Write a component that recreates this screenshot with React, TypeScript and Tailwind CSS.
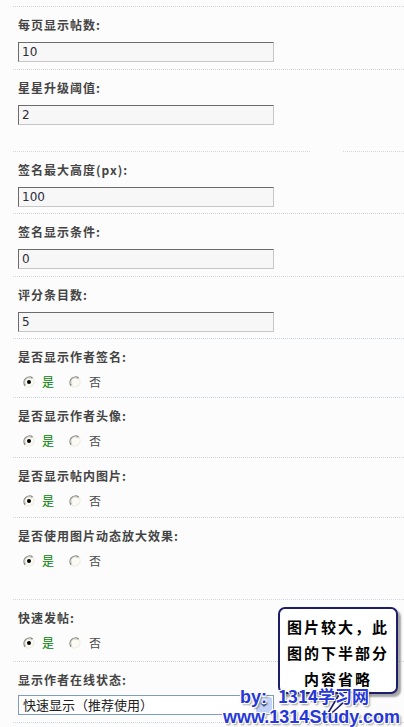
import React from "react";

const cjk = "font-['Noto_Sans_CJK_SC',sans-serif]";

function Dots() {
  return <div className="h-px border-t border-dotted border-[#cfd6df]" />;
}

function SplitDots() {
  return (
    <div className="flex h-px">
      <div className="w-[297px] border-t border-dotted border-[#cfd6df]" />
      <div className="ml-[33px] flex-1 border-t border-dotted border-[#cfd6df]" />
    </div>
  );
}

function Label({ text }: { text: string }) {
  return (
    <div className={`${cjk} h-4 text-[12px] leading-4 font-bold tracking-[1px] text-[#444]`}>
      {text}
    </div>
  );
}

function Radio({ checked }: { checked: boolean }) {
  return (
    <svg width="12" height="12" viewBox="0 0 12 12" className="shrink-0">
      <circle cx="6" cy="6" r="5.4" fill="#fbfbf3" />
      <path d="M2.2 9.8 A5.4 5.4 0 0 1 9.8 2.2" fill="none" stroke="#858585" strokeWidth="1.2" />
      <path d="M9.8 2.2 A5.4 5.4 0 0 1 2.2 9.8" fill="none" stroke="#ecece4" strokeWidth="1.2" />
      <path d="M3 9 A4.2 4.2 0 0 1 9 3" fill="none" stroke="#b5b5b0" strokeWidth="0.8" />
      {checked && <circle cx="6" cy="6" r="2" fill="#000" />}
    </svg>
  );
}

function TextRow({ label, value, pb, split }: { label: string; value: string; pb: string; split?: boolean }) {
  return (
    <div>
      {split ? <SplitDots /> : <Dots />}
      <div className={`pl-[5px] pt-[10px] ${pb}`}>
        <Label text={label} />
        <div className="mt-[9px] h-[20px] w-[256px] border border-t-[#6b6b6b] border-l-[#6b6b6b] border-r-[#c6c6c6] border-b-[#c6c6c6] bg-[#f7f7f7] pl-[3px] font-['DejaVu_Sans',sans-serif] text-[12px] leading-[18px] text-[#2b2b3b]">
          {value}
        </div>
      </div>
    </div>
  );
}

function RadioRow({ label, pb }: { label: string; pb: string }) {
  return (
    <div>
      <Dots />
      <div className={`pl-[5px] pt-[10px] ${pb}`}>
        <Label text={label} />
        <div className={`${cjk} mt-[9px] flex h-4 items-center pl-[5px] text-[12px] leading-4`}>
          <Radio checked />
          <span className="ml-[7px] text-[#008000]">是</span>
          <span className="ml-[15px]">
            <Radio checked={false} />
          </span>
          <span className="ml-[8px] text-[#4a4a4a]">否</span>
        </div>
      </div>
    </div>
  );
}

export default function App() {
  return (
    <div className="relative h-[727px] w-[404px] overflow-hidden bg-[#fcfcfc]">
      <div className="ml-[13px] pt-[6px]">
        <TextRow label="每页显示帖数:" value="10" pb="pb-[7px]" />
        <TextRow label="星星升级阈值:" value="2" pb="pb-[26px]" />
        <TextRow label="签名最大高度(px):" value="100" pb="pb-[6px]" split />
        <TextRow label="签名显示条件:" value="0" pb="pb-[7px]" />
        <TextRow label="评分条目数:" value="5" pb="pb-[6px]" />
        <RadioRow label="是否显示作者签名:" pb="pb-[7px]" />
        <RadioRow label="是否显示作者头像:" pb="pb-[8px]" />
        <RadioRow label="是否显示帖内图片:" pb="pb-[8px]" />
        <RadioRow label="是否使用图片动态放大效果:" pb="pb-[30px]" />
        <RadioRow label="快速发帖:" pb="pb-[10px]" />
        <div>
          <Dots />
          <div className="pl-[5px] pt-[10px] pb-[7px]">
            <Label text="显示作者在线状态:" />
            <div className="mt-[7px] flex h-[20px] w-[256px] items-center border border-[#7f9db9] bg-white">
              <span className={`${cjk} flex-1 pl-[4px] text-[13px] leading-[18px] text-[#222]`}>
                快速显示（推荐使用）
              </span>
              <div className="mr-px flex h-[16px] w-[16px] items-center justify-center rounded-[2px] bg-[#c3d3f8]">
                <svg width="8" height="8" viewBox="0 0 8 8">
                  <path d="M1 2 L4 5 L7 2" fill="none" stroke="#4d6185" strokeWidth="1.5" />
                </svg>
              </div>
            </div>
          </div>
        </div>
        <Dots />
      </div>

      {/* callout bubble */}
      <div className="absolute left-[278px] top-[607px] h-[87px] w-[120px] rounded-[7px] border-2 border-[#1d1d6b] bg-white shadow-[3px_3px_2px_rgba(0,0,0,0.35)]">
        <div className={`${cjk} flex flex-col gap-[9px] pt-[9px] text-center text-[15px] leading-[17px] font-bold tracking-[2px] text-black`}>
          <div>图片较大，此</div>
          <div>图的下半部分</div>
          <div>内容省略</div>
        </div>
      </div>
      <svg className="absolute left-[310px] top-[690px]" width="60" height="36" viewBox="0 0 60 36">
        <path d="M30 3 L14 30 L44 3" fill="#fff" stroke="#1d1d6b" strokeWidth="1.6" strokeLinejoin="round" />
        <path d="M29.5 5 L44 5" stroke="#fff" strokeWidth="3" />
      </svg>

      {/* watermark */}
      <div className="absolute left-[240px] top-[688px] flex items-baseline font-['Liberation_Sans',sans-serif] font-bold text-[#2637d6] [text-shadow:1px_1px_0_#fff,-1px_-1px_0_#fff,1px_-1px_0_#fff,-1px_1px_0_#fff,2px_2px_2px_rgba(0,0,0,0.4)]">
        <span className="text-[18px] leading-[16px]">by:</span>
        <span className={`${cjk} ml-[11px] text-[17px] leading-[16px]`}>1314学习网</span>
      </div>
      <div className="absolute left-[223px] top-[706px] font-['Liberation_Sans',sans-serif] text-[18px] leading-[22px] font-bold text-[#2637d6] [text-shadow:1px_1px_0_#fff,-1px_-1px_0_#fff,1px_-1px_0_#fff,-1px_1px_0_#fff,2px_2px_2px_rgba(0,0,0,0.4)]">
        www.1314Study.com
      </div>
    </div>
  );
}
